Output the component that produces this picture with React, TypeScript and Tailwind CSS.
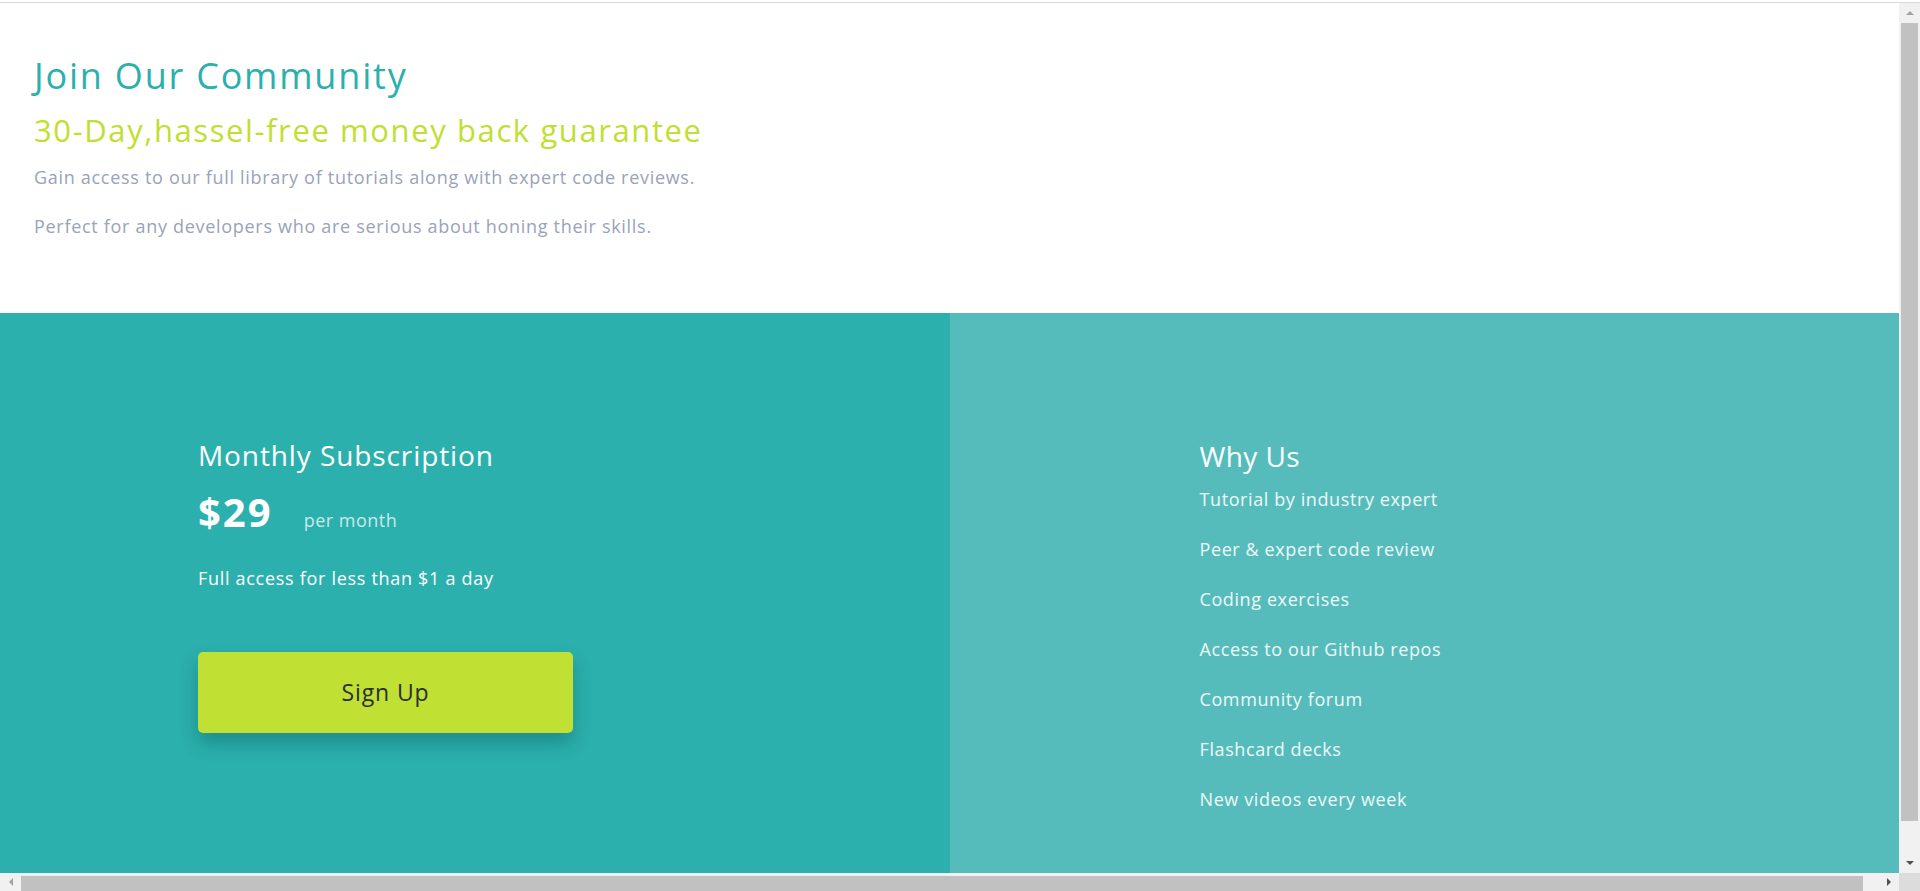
import { ReactNode } from "react";

const reasons = [
  "Tutorial by industry expert",
  "Peer & expert code review",
  "Coding exercises",
  "Access to our Github repos",
  "Community forum",
  "Flashcard decks",
  "New videos every week",
];

function Arrow({ dir, dark }: { dir: "up" | "down" | "left" | "right"; dark?: boolean }) {
  const points = {
    up: "0,4 4,0 8,4",
    down: "0,0 8,0 4,4",
    left: "4,0 4,8 0,4",
    right: "0,0 4,4 0,8",
  }[dir];
  const vertical = dir === "up" || dir === "down";
  return (
    <svg
      width={vertical ? 8 : 4}
      height={vertical ? 4 : 8}
      viewBox={vertical ? "0 0 8 4" : "0 0 4 8"}
      className={dark ? "fill-[#505050]" : "fill-[#a3a3a3]"}>
      <polygon points={points} />
    </svg>
  );
}

function ScrollButton({ className, children }: { className: string; children: ReactNode }) {
  return <div className={`flex items-center justify-center ${className}`}>{children}</div>;
}

export default function App() {
  return (
    <div className="h-screen w-full flex flex-col overflow-hidden bg-white font-['Open_Sans',sans-serif]">
      <div className="h-[3px] border-b border-[#d9d9d9] bg-white" />
      <div className="flex flex-1 min-h-0">
        <main className="flex-1 min-w-0 overflow-hidden">
          {/* intro */}
          <section className="h-[310px] pl-[34px] pt-[51px]">
            <h1 className="text-[36px] leading-[44px] tracking-[1.8px] text-[#2bb0ad]">Join Our Community</h1>
            <h2 className="mt-[14px] text-[31px] leading-[36px] tracking-[1.6px] text-[#bfdf32]">
              30-Day,hassel-free money back guarantee
            </h2>
            <p className="mt-[17px] text-[18px] leading-[24px] tracking-[0.7px] text-[#99a3ba]">
              Gain access to our full library of tutorials along with expert code reviews.
            </p>
            <p className="mt-[25px] text-[18px] leading-[24px] tracking-[0.7px] text-[#99a3ba]">
              Perfect for any developers who are serious about honing their skills.
            </p>
          </section>

          {/* pricing */}
          <section className="grid grid-cols-2 h-[640px]">
            <div className="bg-[#2bb0ad] pl-[198px] pt-[125px] text-white">
              <h3 className="text-[28px] leading-[34px] tracking-[0.9px]">Monthly Subscription</h3>
              <div className="mt-[16px] flex items-baseline gap-[31px]">
                <span className="text-[40px] leading-[48px] font-bold tracking-[2px]">$29</span>
                <span className="text-[18px] leading-[24px] tracking-[0.5px] text-white/75">per month</span>
              </div>
              <p className="mt-[30px] text-[18px] leading-[24px] tracking-[0.7px]">
                Full access for less than $1 a day
              </p>
              <button className="mt-[62px] w-[375px] h-[81px] rounded-[5px] bg-[#c0e033] text-[23px] tracking-[0.9px] text-[#2a2f2f] shadow-[0_10px_18px_rgba(0,60,60,0.3)]">
                Sign Up
              </button>
            </div>
            <div className="bg-[#55bcbb] pl-[250px] pt-[126px] text-white">
              <h3 className="text-[28px] leading-[34px] tracking-[0.4px]">Why Us</h3>
              <ul className="mt-[14px] flex flex-col gap-[26px]">
                {reasons.map((r) => (
                  <li key={r} className="text-[18px] leading-[24px] tracking-[0.6px] text-white/90">
                    {r}
                  </li>
                ))}
              </ul>
            </div>
          </section>
        </main>

        {/* vertical scrollbar */}
        <div className="w-[21px] flex flex-col bg-[#f1f1f1]">
          <ScrollButton className="h-[20px]">
            <Arrow dir="up" />
          </ScrollButton>
          <div className="flex-1 px-[2px]">
            <div className="h-[798px] bg-[#c1c1c1]" />
          </div>
          <ScrollButton className="h-[20px]">
            <Arrow dir="down" dark />
          </ScrollButton>
        </div>
      </div>

      {/* horizontal scrollbar */}
      <div className="h-[18px] flex bg-[#f1f1f1]">
        <ScrollButton className="w-[21px]">
          <Arrow dir="left" />
        </ScrollButton>
        <div className="flex-1 pt-[3px]">
          <div className="h-full w-[1842px] bg-[#c1c1c1]" />
        </div>
        <ScrollButton className="w-[21px]">
          <Arrow dir="right" dark />
        </ScrollButton>
        <div className="w-[21px] bg-[#dcdcdc]" />
      </div>
    </div>
  );
}
